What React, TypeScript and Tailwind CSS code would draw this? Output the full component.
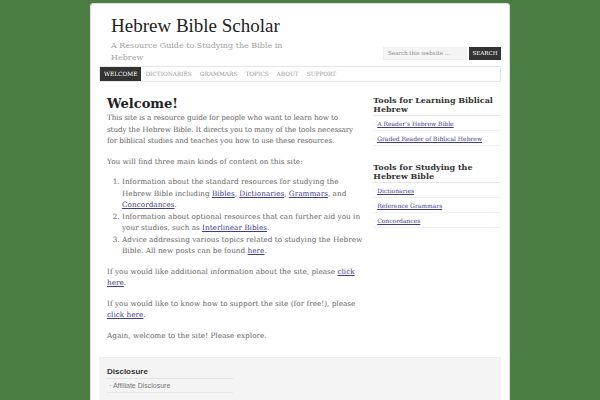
import React from "react";

const serif = "font-['DejaVu_Serif',serif]";

function A({ children }: { children: React.ReactNode }) {
  return <a className="text-[#3f3c8c] underline">{children}</a>;
}

function Widget({ title, items }: { title: string; items: string[] }) {
  return (
    <div className="mb-[17px]">
      <h4 className="text-[8px] leading-[8.5px] font-bold text-[#333] pb-[2px] border-b border-[#e6e6e6]">{title}</h4>
      <ul>
        {items.map((it) => (
          <li key={it} className="text-[6px] leading-[8px] pt-[4px] pb-[2px] border-b border-[#efefef] text-[#999]">
            · <A>{it}</A>
          </li>
        ))}
      </ul>
    </div>
  );
}

export default function App() {
  const nav = ["WELCOME", "DICTIONARIES", "GRAMMARS", "TOPICS", "ABOUT", "SUPPORT"];
  return (
    <div className={`w-[600px] h-[400px] overflow-hidden bg-[#4b7d45] ${serif}`}>
      <div className="ml-[90px] mt-[3px] w-[420px] h-[420px] bg-white border border-[#ddd] rounded-[3px] px-[8px]">
        {/* Header */}
        <div className="flex justify-between items-end pt-[7px] h-[62px]">
          <div className="pl-[12px] mb-[2px]">
            <h1 className="font-['Liberation_Serif',serif] text-[19px] leading-[22px] text-[#222]">Hebrew Bible Scholar</h1>
            <p className="text-[8px] leading-[12px] text-[#a0a0a0] w-[180px] mt-[3px]">A Resource Guide to Studying the Bible in Hebrew</p>
          </div>
          <div className="flex items-center mb-[6px]">
            <div className="w-[84px] h-[13px] bg-[#f4f4f4] border border-[#eee] text-[5.5px] leading-[11px] text-[#888] pl-[4px]">Search this website …</div>
            <div className="ml-[2px] w-[32px] h-[13px] bg-[#333] text-white text-[5.5px] leading-[13px] text-center">SEARCH</div>
          </div>
        </div>
        {/* Nav */}
        <div className="border border-[#e6e6e6] flex h-[16px]">
          {nav.map((n, i) => (
            <div
              key={n}
              className={`px-[4px] text-[5.8px] leading-[14px] ${i === 0 ? "bg-[#333] text-white" : "text-[#999]"}`}
            >
              {n}
            </div>
          ))}
        </div>
        {/* Content */}
        <div className="flex pl-[8px] pt-[14px]">
          <div className="w-[256px] text-[7.3px] leading-[11.5px] text-[#666]">
            <h2 className="text-[13px] leading-[16px] font-bold text-[#222]">Welcome!</h2>
            <p className="mb-[9px] tracking-[-0.15px]">
              This site is a resource guide for people who want to learn how to<br />
              study the Hebrew Bible. It directs you to many of the tools necessary<br />
              for biblical studies and teaches you how to use these resources.
            </p>
            <p className="mb-[9px]">You will find three main kinds of content on this site:</p>
            <ol className="list-decimal pl-[15px] mb-[9px]">
              <li>
                Information about the standard resources for studying the Hebrew Bible including <A>Bibles</A>, <A>Dictionaries</A>, <A>Grammars</A>, and <A>Concordances</A>.
              </li>
              <li>
                Information about optional resources that can further aid you in your studies, such as <A>Interlinear Bibles</A>.
              </li>
              <li>
                Advice addressing various topics related to studying the Hebrew Bible. All new posts can be found <A>here</A>.
              </li>
            </ol>
            <p className="mb-[9px]">
              If you would like additional information about the site, please <A>click here</A>.
            </p>
            <p className="mb-[9px]">
              If you would like to know how to support the site (for free!), please <A>click here</A>.
            </p>
            <p>Again, welcome to the site! Please explore.</p>
          </div>
          <div className="ml-[11px] w-[128px] pt-[-1px]">
            <Widget title="Tools for Learning Biblical Hebrew" items={["A Reader's Hebrew Bible", "Graded Reader of Biblical Hebrew"]} />
            <Widget title="Tools for Studying the Hebrew Bible" items={["Dictionaries", "Reference Grammars", "Concordances"]} />
          </div>
        </div>
        {/* Footer */}
        <div className="mt-[16px] bg-[#f4f4f4] border-t border-[#eee] pt-[9px] pl-[8px] h-[60px] font-['Liberation_Sans',sans-serif]">
          <div className="w-[126px]">
            <h4 className="text-[8px] font-bold leading-[10px] text-[#333] pb-[1px] border-b border-[#e2e2e2]">Disclosure</h4>
            <div className="text-[7px] leading-[9px] text-[#777] py-[2px] pl-[2px] border-b border-[#e8e8e8]">· Affiliate Disclosure</div>
          </div>
        </div>
      </div>
    </div>
  );
}
